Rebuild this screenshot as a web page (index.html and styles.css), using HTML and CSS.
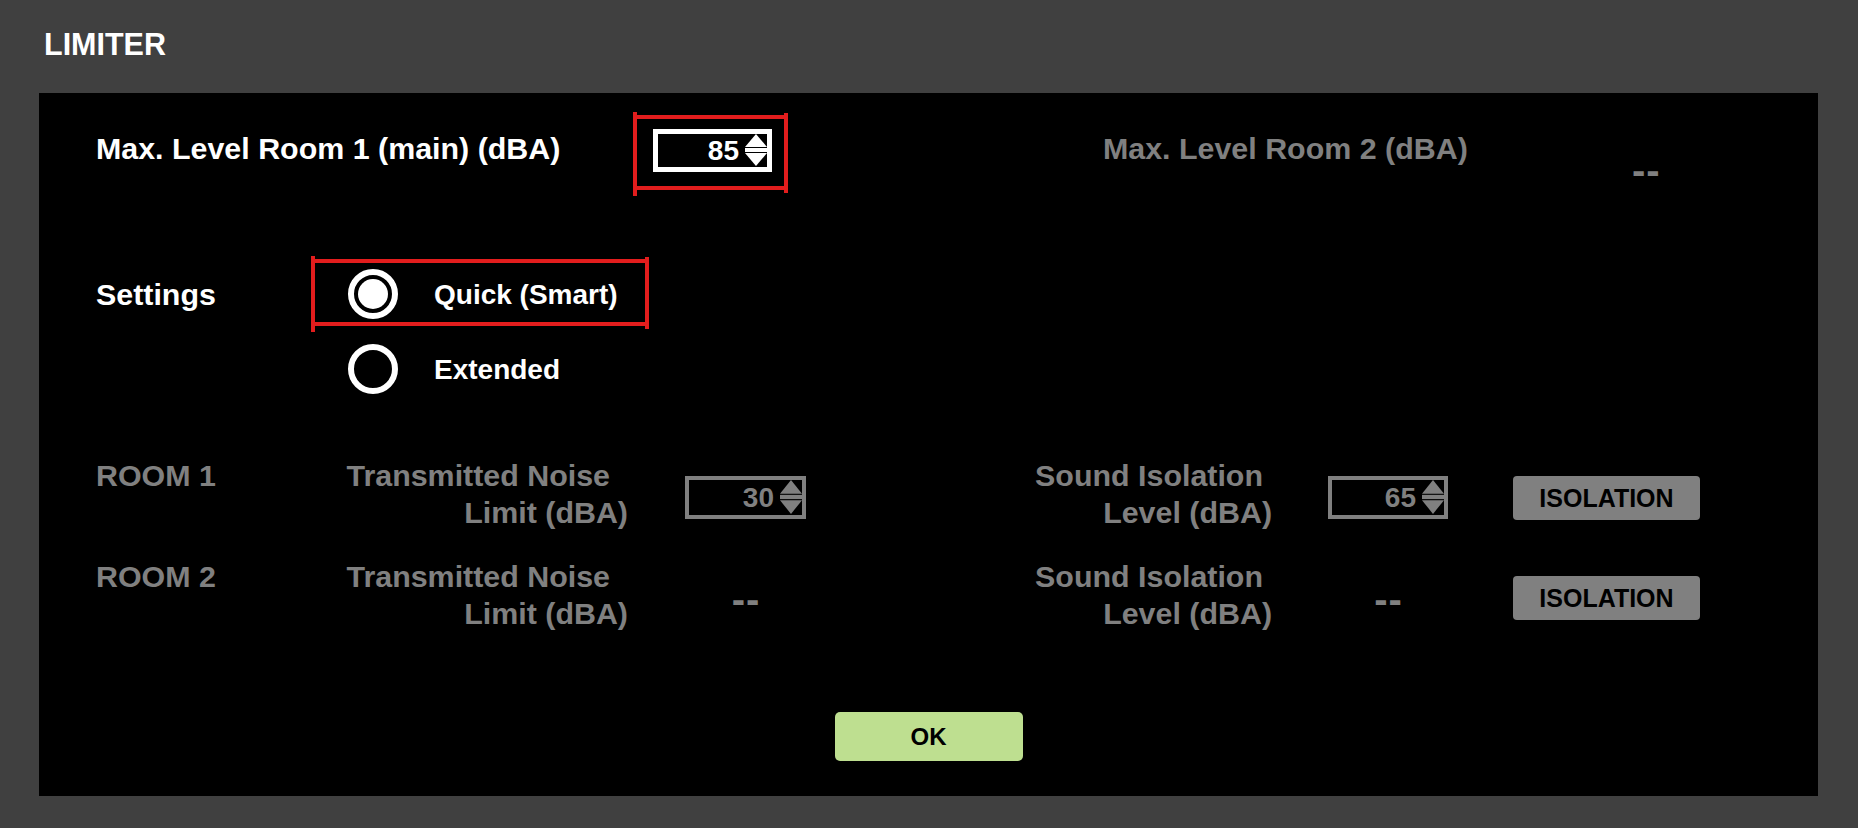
FILE: index.html
```html
<!DOCTYPE html>
<html lang="en">
  <head>
    <meta charset="UTF-8" />
    <meta name="viewport" content="width=device-width, initial-scale=1.0" />
    <title>Limiter</title>
    <link rel="stylesheet" href="styles.css">
  </head>
  <body>
    <h1 class="title">LIMITER</h1>

    <div class="panel">
      <div class="row">
        <div class="label main-label">Max. Level Room 1 (main) (dBA)</div>
        <div class="mark mark-level">
          <div class="spin">
            <span class="spin-value">85</span>
            <svg class="spin-arrows" viewBox="0 0 23 33" preserveAspectRatio="none">
              <polygon points="12,0 23,13 1,13" fill="currentColor" />
              <rect x="1" y="14" width="22" height="4" fill="currentColor" />
              <polygon points="1,19 23,19 12,32" fill="currentColor" />
            </svg>
          </div>
        </div>
        <div class="label muted room2-label">Max. Level Room 2 (dBA)</div>
        <div class="label muted dash room2-dash">--</div>
      </div>

      <div class="row settings-row">
        <div class="label settings-label">Settings</div>
        <div class="mark mark-mode">
          <div class="option">
            <span class="radio checked"></span>
            <span class="option-text">Quick (Smart)</span>
          </div>
        </div>
      </div>
      <div class="option option-extended">
        <span class="radio"></span>
        <span class="option-text">Extended</span>
      </div>

      <div class="row room-row">
        <div class="label muted room-name">ROOM 1</div>
        <div class="label muted field-label noise-label">
          <span class="line first">Transmitted Noise</span>
          <span class="line">Limit (dBA)</span>
        </div>
        <div class="spin spin-muted noise-col">
          <span class="spin-value">30</span>
          <svg class="spin-arrows" viewBox="0 0 23 33" preserveAspectRatio="none">
            <polygon points="12,0 23,13 1,13" fill="currentColor" />
            <rect x="1" y="14" width="22" height="4" fill="currentColor" />
            <polygon points="1,19 23,19 12,32" fill="currentColor" />
          </svg>
        </div>
        <div class="label muted field-label sound-label">
          <span class="line first">Sound Isolation</span>
          <span class="line">Level (dBA)</span>
        </div>
        <div class="spin spin-muted sound-col">
          <span class="spin-value">65</span>
          <svg class="spin-arrows" viewBox="0 0 23 33" preserveAspectRatio="none">
            <polygon points="12,0 23,13 1,13" fill="currentColor" />
            <rect x="1" y="14" width="22" height="4" fill="currentColor" />
            <polygon points="1,19 23,19 12,32" fill="currentColor" />
          </svg>
        </div>
        <button type="button" class="isolation">ISOLATION</button>
      </div>

      <div class="row room-row">
        <div class="label muted room-name">ROOM 2</div>
        <div class="label muted field-label noise-label">
          <span class="line first">Transmitted Noise</span>
          <span class="line">Limit (dBA)</span>
        </div>
        <div class="label muted dash empty noise-col">--</div>
        <div class="label muted field-label sound-label">
          <span class="line first">Sound Isolation</span>
          <span class="line">Level (dBA)</span>
        </div>
        <div class="label muted dash empty sound-col">--</div>
        <button type="button" class="isolation">ISOLATION</button>
      </div>

      <div class="actions">
        <button type="button" class="ok">OK</button>
      </div>
    </div>
  </body>
</html>
```

FILE: styles.css
```css
body {
  margin: 0;
  height: 828px;
  overflow: hidden;
  background: #404040;
  color: #fff;
  font-family: "Liberation Sans", Arial, sans-serif;
  font-weight: bold;
}
.title {
  margin: 0;
  padding: 26px 0 0 44px;
  font-size: 30.5px;
  line-height: 37px;
  font-weight: bold;
}
.panel {
  margin: 30px 40px 0 39px;
  height: 703px;
  box-sizing: border-box;
  padding: 22px 57px 35px 57px;
  background: #000;
}
.row {
  display: flex;
  align-items: flex-start;
}
.label {
  font-size: 30.4px;
  line-height: 37px;
  white-space: nowrap;
}
.muted {
  color: #808080;
}
.dash {
  font-size: 40px;
  letter-spacing: 1px;
}

/* red annotation boxes */
.mark {
  position: relative;
  box-sizing: border-box;
  border-top: 4px solid #e21d1d;
  border-bottom: 4px solid #e21d1d;
}
.mark::before,
.mark::after {
  content: "";
  position: absolute;
  width: 4px;
  background: #e21d1d;
}
.mark::before {
  left: 0;
  top: -7px;
  bottom: -10px;
}
.mark::after {
  right: 0;
  top: -6px;
  bottom: -7px;
}

/* top row */
.main-label {
  width: 537px;
  padding-top: 15px;
}
.mark-level {
  width: 155px;
  height: 75px;
  padding: 10px 16px 14px 20px;
}
.room2-label {
  width: 529px;
  margin-left: 315px;
  padding-top: 15px;
}
.room2-dash {
  margin-top: 37px;
}

/* spin boxes */
.spin {
  display: flex;
  width: 119px;
  height: 43px;
  box-sizing: border-box;
  border: 5px solid #fff;
  color: #fff;
}
.spin-value {
  flex: 1;
  text-align: right;
  font-size: 28px;
  line-height: 33px;
  padding-right: 5px;
}
.spin-arrows {
  display: block;
  width: 23px;
  height: 33px;
}
.spin-muted {
  border-width: 4px;
  border-color: #808080;
  color: #808080;
}
.spin-muted .spin-value {
  line-height: 35px;
}
.spin-muted .spin-arrows {
  height: 35px;
}

/* settings */
.settings-row {
  margin-top: 69px;
}
.settings-label {
  width: 215px;
  padding-top: 17px;
}
.mark-mode {
  width: 338px;
  height: 67px;
  padding: 6px 0 3px 37px;
}
.option {
  display: flex;
  align-items: center;
  gap: 36px;
}
.option-text {
  font-size: 28px;
  line-height: 37px;
}
.option-extended {
  margin: 18px 0 0 252px;
}
.radio {
  display: flex;
  align-items: center;
  justify-content: center;
  width: 50px;
  height: 50px;
  box-sizing: border-box;
  border: 6px solid #fff;
  border-radius: 50%;
}
.radio.checked::after {
  content: "";
  width: 30px;
  height: 30px;
  border-radius: 50%;
  background: #fff;
}

/* rooms */
.room-row {
  margin-top: 63px;
}
.room-row + .room-row {
  margin-top: 27px;
}
.room-name {
  width: 232px;
}
.field-label {
  text-align: right;
}
.field-label .line {
  display: block;
}
.noise-label {
  width: 300px;
}
.noise-label .first {
  padding-right: 18px;
}
.sound-label {
  width: 466px;
}
.sound-label .first {
  padding-right: 9px;
}
.noise-col {
  width: 121px;
  margin: 19px 0 0 57px;
}
.sound-col {
  width: 120px;
  margin: 19px 0 0 56px;
}
.empty {
  text-align: center;
  padding-left: 1px;
  box-sizing: border-box;
  margin-top: 23px;
}
.isolation {
  width: 187px;
  height: 44px;
  margin: 19px 0 0 65px;
  padding: 0;
  border: none;
  border-radius: 4px;
  background: #808080;
  color: #000;
  font: bold 25px "Liberation Sans", Arial, sans-serif;
}
.room-row + .room-row .isolation {
  margin-top: 18px;
}

/* ok */
.actions {
  display: flex;
  justify-content: center;
  margin-top: 80px;
}
.ok {
  width: 188px;
  height: 49px;
  padding: 0;
  border: none;
  border-radius: 5px;
  background: #bedf90;
  color: #000;
  font: bold 24px "Liberation Sans", Arial, sans-serif;
}
```
